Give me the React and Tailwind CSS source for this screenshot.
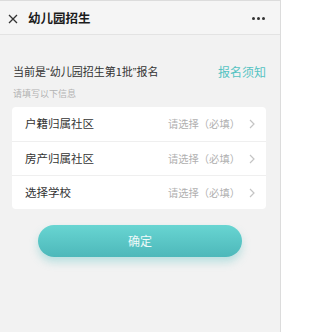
import React from "react"

const rows = ["户籍归属社区", "房产归属社区", "选择学校"]

const Chevron = () => (
    <svg width="6" height="10" viewBox="0 0 6 10" className="ml-[9px]">
        <path d="M1 1l4 4-4 4" fill="none" stroke="#c4c4c4" strokeWidth="1.2" />
    </svg>
)

// latin quotes are narrow in the reference, CJK ones are full width
const Q = ({ children }) => (
    <span style={{ fontFamily: '"Liberation Sans", sans-serif' }}>{children}</span>
)

const App = () => {
    return (
        <div className="w-[281px] h-[332px] bg-[#f2f2f2] border-t border-r border-[#dcdcdc] overflow-hidden"
            style={{ fontFamily: '"Noto Sans CJK SC", "Noto Sans", sans-serif' }}>
            {/* header */}
            <div className="h-[34px] flex items-center border-b border-[#e3e3e3] bg-[#f5f5f5]">
                <svg width="10" height="10" viewBox="0 0 10 10" className="ml-[8px] mt-[2px]">
                    <path d="M1 1l8 8M9 1l-8 8" stroke="#333" strokeWidth="1.3" />
                </svg>
                <span className="ml-[10px] mt-[2px] text-[12.5px] font-bold text-[#1c1c1c] leading-none">幼儿园招生</span>
                <div className="ml-auto mr-[15px] mt-[2px] flex gap-[2px]">
                    <span className="w-[3px] h-[3px] rounded-full bg-[#333]" />
                    <span className="w-[3px] h-[3px] rounded-full bg-[#333]" />
                    <span className="w-[3px] h-[3px] rounded-full bg-[#333]" />
                </div>
            </div>

            <div className="pl-[12px] pr-[14px]">
                <div className="mt-[28px] flex items-center justify-between pl-[1px]">
                    <span className="text-[11px] leading-[16px] text-[#333]">当前是<Q>“</Q>幼儿园招生第1批<Q>”</Q>报名</span>
                    <span className="text-[12px] leading-[16px] text-[#55c3c2]">报名须知</span>
                </div>
                <p className="mt-[8px] pl-[1px] text-[9px] leading-[12px] text-[#b3b3b3]">请填写以下信息</p>

                {/* form card */}
                <div className="mt-[7px] bg-white rounded-[4px]">
                    {rows.map((r, i) => (
                        <div key={r} className={"h-[34px] flex items-center pl-[13px] pr-[11px] " + (i > 0 ? "border-t border-[#efefef]" : "")}>
                            <span className="text-[11.5px] text-[#333]">{r}</span>
                            <span className="ml-auto text-[10.3px] text-[#b0b0b0]">请选择（必填）</span>
                            <Chevron />
                        </div>
                    ))}
                </div>
            </div>

            <button className="mt-[16px] ml-[38px] w-[204px] h-[32px] rounded-full bg-gradient-to-b from-[#68d5d2] to-[#4db8ba] shadow-[0_5px_8px_rgba(77,190,190,0.35)] text-white/90 text-[12px]">
                确定
            </button>
        </div>
    )
}

export default App
